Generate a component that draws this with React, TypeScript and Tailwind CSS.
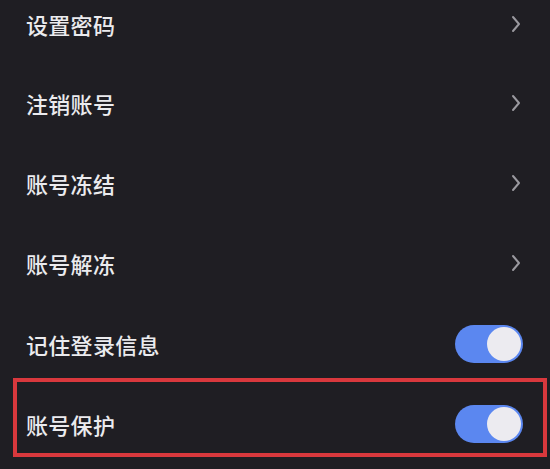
import React from "react";

function Chevron() {
  return (
    <svg width="10" height="18" viewBox="0 0 10 18" fill="none" className="mr-[29px]">
      <path d="M2 2 L8 9 L2 16" stroke="#9a999f" strokeWidth="2" strokeLinecap="round" strokeLinejoin="round" />
    </svg>
  );
}

function Toggle() {
  return (
    <div className="mr-[27px] flex h-[38px] w-[68px] items-center justify-end rounded-full bg-[#5b87f0] pr-[2px]">
      <div className="h-[34px] w-[34px] rounded-full bg-[#ecebf0]" />
    </div>
  );
}

function Row({ label, right, extra = "" }: { label: string; right: React.ReactNode; extra?: string }) {
  return (
    <div className={`flex h-[80px] items-center justify-between ${extra}`}>
      <span className="ml-[26px] text-[22px] font-medium tracking-[0.3px] text-[#ebebee]">{label}</span>
      {right}
    </div>
  );
}

export default function App() {
  return (
    <div
      className="h-[469px] w-[550px] overflow-hidden bg-[#1f1e23]"
      style={{ fontFamily: '"Noto Sans CJK SC", "Noto Sans", sans-serif' }}
    >
      <div className="-mt-[16px] flex flex-col">
        <Row label="设置密码" right={<Chevron />} />
        <Row label="注销账号" right={<Chevron />} extra="-mt-px" />
        <Row label="账号冻结" right={<Chevron />} />
        <Row label="账号解冻" right={<Chevron />} />
        <Row label="记住登录信息" right={<Toggle />} extra="mt-px" />
        <div className="relative">
          <Row label="账号保护" right={<Toggle />} />
          <div className="pointer-events-none absolute left-[13px] right-[3px] top-[-6px] h-[79px] border-[4px] border-[#d8383d]" />
        </div>
      </div>
    </div>
  );
}
